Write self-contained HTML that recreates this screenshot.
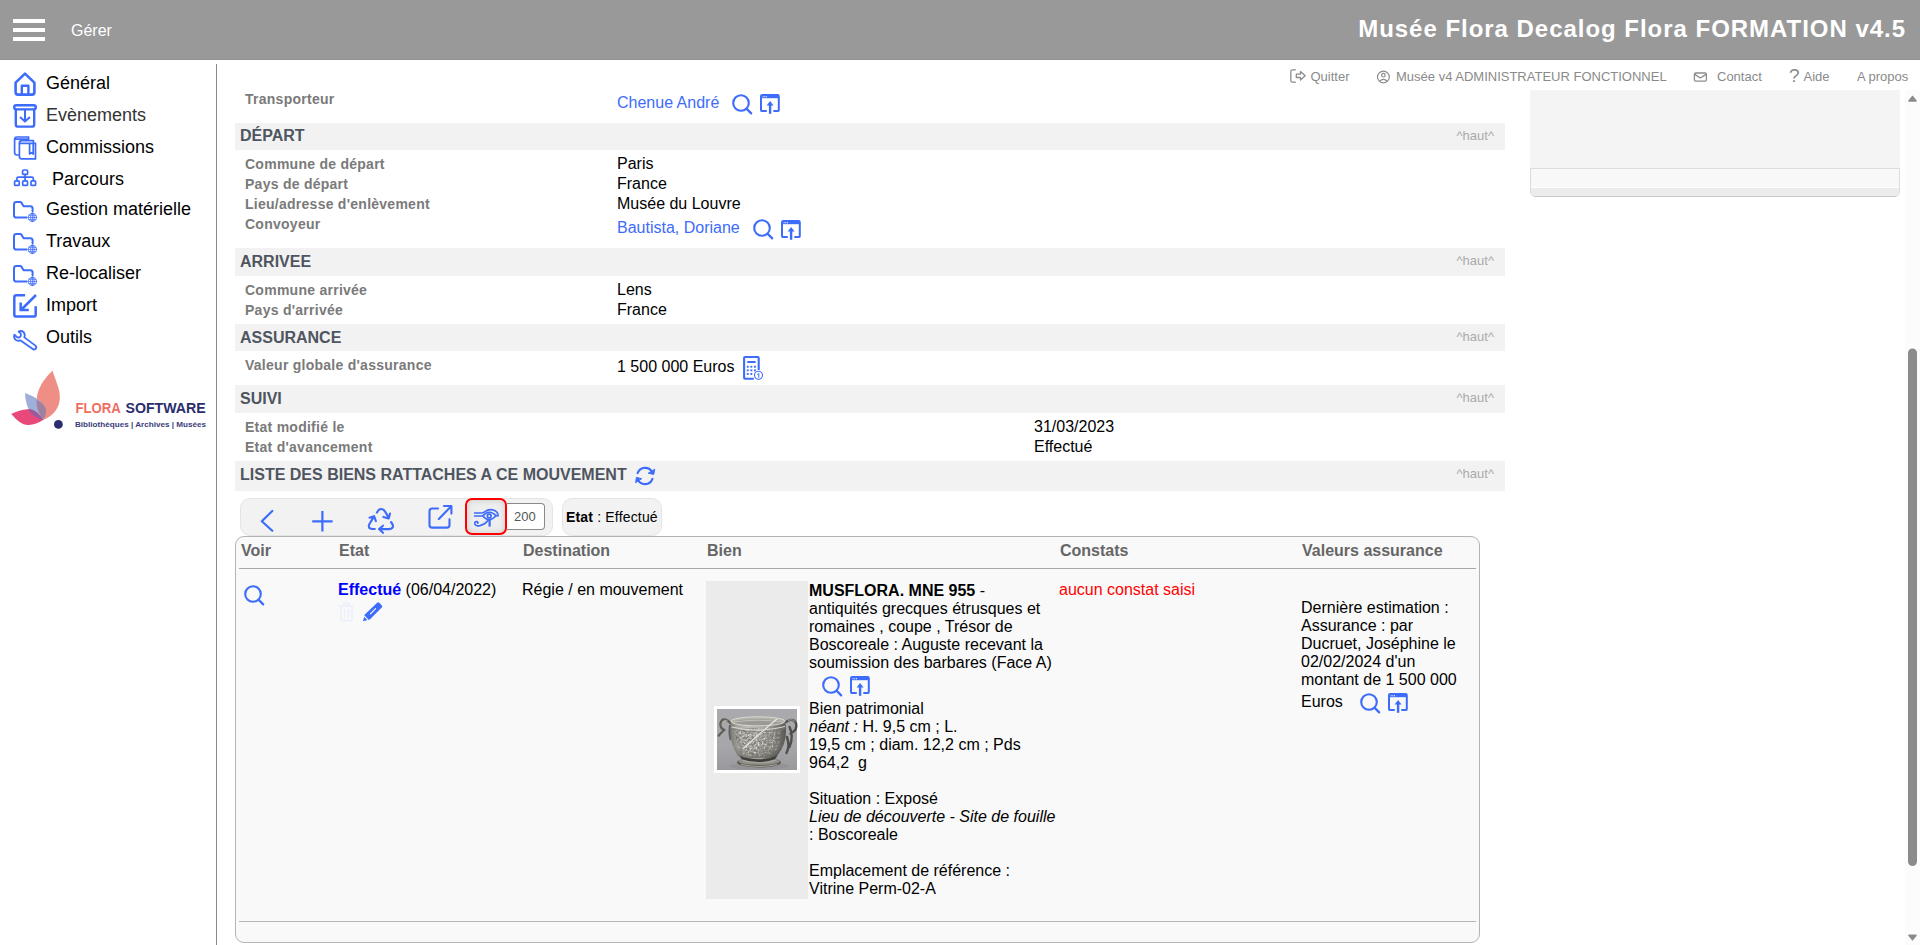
<!DOCTYPE html>
<html lang="fr">
<head>
<meta charset="utf-8">
<title>Musée Flora Decalog Flora FORMATION v4.5</title>
<style>
*{box-sizing:border-box;margin:0;padding:0}
html,body{width:1920px;height:945px;overflow:hidden;background:#fff;font-family:"Liberation Sans",Arial,sans-serif;color:#000}
body{position:relative}
.abs{position:absolute}
svg{display:block;overflow:visible}
.ic{position:absolute;fill:none;stroke:#3d6cfa;stroke-width:2;stroke-linecap:round;stroke-linejoin:round}
#hdr{position:absolute;left:0;top:0;width:1920px;height:60px;background:#999;border-bottom:1px solid #949494}
#hdr .bar{position:absolute;left:13px;width:32px;height:4px;background:#fff}
#hdr .gerer{position:absolute;left:71px;top:22px;font-size:16px;line-height:18px;color:#fff}
#hdr .title{position:absolute;right:14px;top:14px;font-size:24px;line-height:30px;font-weight:bold;color:#fff;letter-spacing:.97px;white-space:nowrap}
#side{position:absolute;left:0;top:60px;width:216px;height:885px}
#vline{position:absolute;left:216px;top:64px;width:1px;height:881px;background:#8a8a8a}
.mi{position:absolute;margin-top:1px;left:46px;font-size:18px;line-height:22px;white-space:nowrap;color:#000}
#top{position:absolute;top:69px;left:0;width:1920px;height:18px;font-size:13px;line-height:16px;color:#8a8a8a}
#top span{position:absolute;top:0;white-space:nowrap}
.sec{position:absolute;left:235px;width:1270px;height:27px;background:#f2f2f2}
.sec b{position:absolute;left:5px;top:4px;font-size:16px;line-height:19px;color:#4f5560;white-space:nowrap}
.sec i{position:absolute;right:11px;top:6px;font-style:normal;font-size:13px;line-height:14px;color:#aaa}
.lb{position:absolute;left:245px;font-size:14px;line-height:16px;font-weight:bold;color:#7a7a7a;letter-spacing:.26px;white-space:nowrap}
.vl{position:absolute;left:617px;font-size:16px;line-height:18px;white-space:nowrap}
.lk{color:#3d6cfa}

.pill{position:absolute;top:498px;height:38px;background:#f2f2f2;border:1px solid #e4e4e4;border-radius:10px}
#eye{position:absolute;left:465px;top:498px;width:42px;height:37px;border:2px solid #f00;border-radius:7px;background:#eee;box-shadow:inset 0 0 6px rgba(0,0,0,.16)}
#nb{position:absolute;left:507px;top:503px;width:38px;height:27px;border:1px solid #8a8a8a;border-left:none;border-radius:0 4px 4px 0;background:#fff;font-size:13px;line-height:25px;color:#555;padding-left:7px}
#tbl{position:absolute;left:235px;top:536px;width:1245px;height:407px;border:1px solid #b4b4b4;border-radius:9px;background:#f9f9f9}
.th{position:absolute;top:542px;font-size:16px;line-height:18px;font-weight:bold;color:#666;white-space:nowrap}
.hl{position:absolute;left:239px;width:1237px;height:1px;background:#a8a8a8}
.td{position:absolute;font-size:16px;line-height:18px;white-space:nowrap}
</style>
</head>
<body>
<div id="hdr">
  <div class="bar" style="top:19px"></div><div class="bar" style="top:28px"></div><div class="bar" style="top:37px"></div>
  <div class="gerer">Gérer</div>
  <div class="title">Musée Flora Decalog Flora FORMATION v4.5</div>
</div>
<div id="side">
  <div class="mi" style="top:11px">Général</div>
  <div class="mi" style="top:43px;color:#333">Evènements</div>
  <div class="mi" style="top:75px">Commissions</div>
  <div class="mi" style="top:107px;left:52px">Parcours</div>
  <div class="mi" style="top:137px">Gestion matérielle</div>
  <div class="mi" style="top:169px">Travaux</div>
  <div class="mi" style="top:201px">Re-localiser</div>
  <div class="mi" style="top:233px">Import</div>
  <div class="mi" style="top:265px">Outils</div>
  <svg class="ic" style="left:0;top:0" width="216" height="400" viewBox="0 60 216 400">
    <!-- home -->
    <path stroke-width="2.6" d="M25 73.6 L15.6 82.6 V92.2 Q15.6 94.6 18 94.6 H32 Q34.4 94.6 34.4 92.2 V82.6 Z"/>
    <path stroke-width="2.4" stroke-linecap="butt" d="M21.8 94.6 V85.7 H28.4 V94.6"/>
    <!-- archive -->
    <rect stroke-width="2.4" x="14.2" y="105.2" width="21.6" height="4.2" rx="2.1"/>
    <path stroke-width="2.4" d="M15.8 109.4 V124.4 Q15.8 126.6 18 126.6 H32 Q34.2 126.6 34.2 124.4 V109.4"/>
    <path stroke-width="2" d="M25 110.5 V121.2 M20.6 117.6 L25 121.6 L29.4 117.6"/>
    <!-- books -->
    <path stroke-width="1.7" d="M28.6 138.8 V137 H17 Q14.6 137 14.6 139.4 V152.6 Q14.6 155 17 155 H18.6 M15 139.2 H28.6"/>
    <path stroke-width="1.7" d="M33.4 143.4 V140.7 H21.8 Q19.4 140.7 19.4 143.1 V156.5 Q19.4 158.9 21.8 158.9 H35.5 V143.4 H19.8 M29.6 143.6 V154 L31.4 152.6 L33.2 154 V143.6"/>
    <!-- orgchart -->
    <g stroke-width="1.7"><rect x="22.6" y="170" width="5" height="4.4" rx="1"/><rect x="14.6" y="180.8" width="4.6" height="4.6" rx="1"/><rect x="22.7" y="180.8" width="4.8" height="4.6" rx="1"/><rect x="31" y="180.8" width="4.6" height="4.6" rx="1"/>
    <path d="M25.1 174.6 V180.6 M16.9 180.6 V178.6 Q16.9 177.2 18.3 177.2 H31.9 Q33.3 177.2 33.3 178.6 V180.6"/></g>
    <!-- folders with globe -->
    <g id="fold" stroke-width="2"><path d="M26.6 217.6 H16.4 Q14 217.6 14 215.2 V204.4 Q14 202 16.4 202 H20 Q21 202 21.6 202.9 L23.6 206.2 H30.2 Q32.6 206.2 32.6 208.6 V211.4"/>
    <g stroke-width=".8"><circle cx="32.4" cy="217.4" r="4.2"/><ellipse cx="32.4" cy="217.4" rx="1.9" ry="4.2"/><path d="M28.2 217.4 H36.6 M32.4 213.2 V221.6 M29 215.2 H35.8 M29 219.6 H35.8"/></g></g>
    <use href="#fold" y="32"/><use href="#fold" y="64"/>
    <!-- import -->
    <path stroke-width="2.5" stroke-linecap="butt" d="M25.1 295.3 H16.4 Q14.3 295.3 14.3 297.4 V314.4 Q14.3 316.5 16.4 316.5 H33.6 Q35.7 316.5 35.7 314.4 V306.2"/>
    <path stroke-width="2.5" stroke-linecap="butt" stroke-linejoin="miter" d="M36 295 L21 310 M20.7 302.4 V310.1 H28.8"/>
    <!-- wrench -->
    <path stroke-width="1.8" d="M18.6 331.6 Q21.4 330.2 23.6 332.2 Q25.4 334.2 24.4 337.4 L35.4 345.6 Q37 347.2 35.6 348.8 Q34.2 350.2 32.4 348.8 L20.6 340.4 Q17.4 341.4 15.4 339.6 Q13.4 337.6 14.4 334.8 L17.4 337.4 Q19.2 337.8 20.4 336.6 Q21.2 335.2 20.8 333.6 Z"/>
  </svg>
  <svg style="position:absolute;left:0;top:300px" width="216" height="80" viewBox="0 360 216 80">
    <path fill="#ef8e84" d="M52.5 370.5 C56 382 60.5 390 59.8 399 C59 410 51 417 43 420 C38 412 35 404 37.5 394 C40 384 47 376 52.5 370.5 Z"/>
    <path fill="#9fb0d8" d="M25 393 C33 396 42 400 45.5 408 C47 413 45 417 43 420 C36 418 29 413 27 405 C25.5 400 25 396 25 393 Z"/>
    <path fill="#e8487a" d="M11.2 413.9 C17 411 24 408.5 30 409.3 C36 410.5 40 415 43 420 C38 423.500 32 425.500 26 424.700 C20 423.500 15 418 11.2 413.9 Z"/>
    <path fill="#9a5b9a" d="M30 409.3 C36 410.5 40 415 43 420 C36 418 30.500 414 28.3 409.200 Z"/>
    <path fill="#a0809e" d="M36.6 399.5 C41 402 44.5 405 45.5 408 C47 413 45 417 43 420 C39 413.500 36 407 36.6 399.5 Z"/>
    <circle cx="58.4" cy="424.4" r="4.4" fill="#2b2d6e"/>
    <text x="75.4" y="413.3" font-family="'Liberation Sans',sans-serif" font-weight="bold" font-size="14.3" fill="#ee6f62" textLength="45.5" lengthAdjust="spacingAndGlyphs">FLORA</text>
    <text x="125.5" y="413.3" font-family="'Liberation Sans',sans-serif" font-weight="bold" font-size="14.3" fill="#2b2d6e" textLength="80.2" lengthAdjust="spacingAndGlyphs">SOFTWARE</text>
    <text x="75" y="427.2" font-family="'Liberation Sans',sans-serif" font-weight="bold" font-size="7.6" fill="#3a3c78" textLength="131" lengthAdjust="spacingAndGlyphs">Bibliothèques | Archives | Musées</text>
  </svg>
</div>
<div id="vline"></div>
<div id="top">
  <svg class="abs" style="left:1288px;top:-2px;fill:none;stroke:#8c8c8c;stroke-width:1.3;stroke-linejoin:round;stroke-linecap:round" width="20" height="18" viewBox="1288 66 20 18">
    <path d="M1295.400 68.800 H1292.600 Q1290.800 68.800 1290.800 70.600 V79.400 Q1290.800 81.200 1292.600 81.200 H1295.400"/>
    <path d="M1296.300 73.100 H1300.500 V70.600 L1305.200 74.800 L1300.500 79 V76.500 H1296.300 Z"/>
  </svg>
  <span style="left:1310.500px">Quitter</span>
  <svg class="abs" style="left:1375px;top:0;fill:none;stroke:#8c8c8c;stroke-width:1.2" width="16" height="16" viewBox="1375 68 16 16">
    <circle cx="1383.400" cy="76" r="5.900"/><circle cx="1383.400" cy="74.200" r="1.800"/><path d="M1379.500 80.400 Q1383.400 76.300 1387.300 80.400"/>
  </svg>
  <span style="left:1396px">Musée v4 ADMINISTRATEUR FONCTIONNEL</span>
  <svg class="abs" style="left:1692px;top:2px;fill:none;stroke:#8c8c8c;stroke-width:1.300;stroke-linejoin:round" width="17" height="12" viewBox="1692 70 17 12">
    <rect x="1694.400" y="72" width="12" height="8.200" rx="1.400"/><path d="M1694.800 73.400 L1700.400 77 L1706 73.400"/>
  </svg>
  <span style="left:1717px">Contact</span>
  <span style="left:1789px;top:-3px;font-size:19px;line-height:20px">?</span>
  <span style="left:1803.500px">Aide</span>
  <span style="left:1857px">A propos</span>
</div>
<div id="main">
<svg width="0" height="0" style="position:absolute"><defs>
<g id="winup"><path stroke-width="2" stroke-linejoin="round" stroke-linecap="butt" d="M6.8 17.100 H2.200 Q1 17.100 1 15.900 V2.200 Q1 1 2.200 1 H17.600 Q18.800 1 18.800 2.200 V15.900 Q18.800 17.100 17.600 17.100 H13.300"/><path stroke="none" fill="#3d6cfa" d="M1 1 H18.800 V4.200 H1 Z"/><path stroke="none" fill="#fff" d="M2.600 2.200 h1 v1 h-1 z M4.300 2.200 h1 v1 h-1 z M6 2.200 h1 v1 h-1 z"/><path stroke-width="2.400" stroke-linecap="butt" d="M10.100 19.800 V9"/><path stroke="none" fill="#3d6cfa" d="M10.100 6.900 L13.600 11.400 H6.600 Z"/></g>
</defs></svg>
<div class="lb" style="top:90.6px">Transporteur</div>
<div class="vl lk" style="top:93.8px;left:617px">Chenue André</div>
<svg class="ic" style="left:730px;top:92px" width="24" height="24" viewBox="-11 -11 24 24"><circle cx="0" cy="0" r="7.8" stroke-width="2.1"/><path stroke-width="2.2" d="M5.7 5.900 L10.200 10.400"/></svg>
<svg class="ic" style="left:760px;top:94px" width="20" height="20" viewBox="0 0 20 20"><use href="#winup"/></svg>
<div class="sec" style="top:123px;height:27px"><b style="top:3px">DÉPART</b><i>^haut^</i></div>
<div class="lb" style="top:156.2px">Commune de départ</div>
<div class="vl" style="top:155.0px;left:617px">Paris</div>
<div class="lb" style="top:176.2px">Pays de départ</div>
<div class="vl" style="top:175.0px;left:617px">France</div>
<div class="lb" style="top:196.2px">Lieu/adresse d'enlèvement</div>
<div class="vl" style="top:195.0px;left:617px">Musée du Louvre</div>
<div class="lb" style="top:216.2px">Convoyeur</div>
<div class="vl lk" style="top:219.4px;left:617px">Bautista, Doriane</div>
<svg class="ic" style="left:751px;top:217px" width="24" height="24" viewBox="-11 -11 24 24"><circle cx="0" cy="0" r="7.8" stroke-width="2.1"/><path stroke-width="2.2" d="M5.7 5.900 L10.200 10.400"/></svg>
<svg class="ic" style="left:781px;top:219.5px" width="20" height="20" viewBox="0 0 20 20"><use href="#winup"/></svg>
<div class="sec" style="top:248px;height:28px"><b>ARRIVEE</b><i>^haut^</i></div>
<div class="lb" style="top:282.1px">Commune arrivée</div>
<div class="vl" style="top:280.8px;left:617px">Lens</div>
<div class="lb" style="top:302.1px">Pays d'arrivée</div>
<div class="vl" style="top:300.9px;left:617px">France</div>
<div class="sec" style="top:324px;height:27px"><b>ASSURANCE</b><i>^haut^</i></div>
<div class="lb" style="top:357.1px">Valeur globale d'assurance</div>
<div class="vl" style="top:358.4px;left:617px">1 500 000 Euros</div>
<div class="sec" style="top:385px;height:28px"><b>SUIVI</b><i>^haut^</i></div>
<div class="lb" style="top:419.1px">Etat modifié le</div>
<div class="vl" style="top:418.4px;left:1034px">31/03/2023</div>
<div class="lb" style="top:439.1px">Etat d'avancement</div>
<div class="vl" style="top:438.4px;left:1034px">Effectué</div>
<div class="sec" style="top:461px;height:30px"><b>LISTE DES BIENS RATTACHES A CE MOUVEMENT</b><i>^haut^</i></div>
<svg class="ic" style="left:742px;top:355px" width="24" height="26" viewBox="742 355 24 26">
<path stroke-width="2.100" stroke-linejoin="round" stroke-linecap="butt" d="M753.800 378.700 H745 Q744.100 378.700 744.100 377.800 V357.900 Q744.100 357 745 357 H757.800 Q758.700 357 758.700 357.900 V370"/>
<path stroke-width="2" d="M748 361.900 H754.900"/>
<g fill="#3d6cfa" stroke="none"><rect x="746.800" y="365.800" width="1.900" height="1.900"/><rect x="750.400" y="365.800" width="1.900" height="1.900"/><rect x="754" y="365.800" width="1.900" height="1.900"/><rect x="746.800" y="369.400" width="1.900" height="1.900"/><rect x="750.400" y="369.400" width="1.900" height="1.900"/><rect x="754" y="369.400" width="1.900" height="1.900"/><rect x="746.800" y="373" width="1.900" height="1.900"/><rect x="750.400" y="373" width="1.900" height="1.900"/></g>
<circle cx="758.500" cy="375.300" r="4" fill="#fff" stroke-width="1.100"/><path stroke-width="1" d="M757.700 374.200 L758.800 373.400 V377.300"/>
</svg>
<svg class="ic" style="left:633px;top:465px" width="24" height="22" viewBox="633 465 24 22">
<path stroke-width="2.100" d="M637.600 473.200 A7.900 7.900 0 0 1 652.300 472.600"/>
<path fill="#3d6cfa" stroke-width="1" d="M654.700 469.600 L653.700 474.400 L648.600 473.300 Z"/>
<path stroke-width="2.100" d="M652.400 478.800 A7.900 7.900 0 0 1 637.700 479.400"/>
<path fill="#3d6cfa" stroke-width="1" d="M635.700 482.300 L636.400 477.400 L641.300 478.600 Z"/>
</svg>
<div class="pill" style="left:240px;width:313px"></div>
<div class="pill" style="left:562px;width:100px"></div>
<svg class="ic" style="left:240px;top:498px" width="313" height="38" viewBox="240 498 313 38">
<path stroke-width="2.200" d="M272.300 511 L261.800 521.200 L272.300 530.800"/>
<path stroke-width="2.200" stroke-linecap="butt" d="M312.200 521.300 H332.600 M322.400 511 V531.600"/>
<g stroke-width="2.100">
<path d="M376.900 512.600 Q379.400 507.300 383.600 509.900 Q385.600 511.600 388.500 517.800 M390 513.500 L388.700 518.600 L383.400 516.900"/>
<path d="M374.800 529 H372.300 Q367.300 528.600 369.300 524.300 L374 516.400 M369.500 517.700 L374.100 516.200 L375.900 521.200"/>
<path d="M391 522 Q393.600 525.300 392.900 527 Q391.800 529.200 388.300 529.100 H379.200 M383 525.700 L379 529.100 L383 532.800"/>
</g>
<path stroke-width="2.100" stroke-linecap="round" d="M438 508.500 H432.200 Q429.500 508.500 429.500 511.200 V524.900 Q429.500 527.600 432.200 527.600 H446.800 Q449.500 527.600 449.500 524.900 V519.400"/>
<path stroke-width="2.100" d="M438.800 519 L451.200 506.200 M444 506 H451.400 V513.600"/>
</svg>
<div id="eye"></div>
<svg class="ic" style="left:472px;top:506px" width="28" height="23" viewBox="472 506 28 23">
<path stroke-width="1.700" d="M474.600 513 H481.600 Q483.200 513 484.600 511.900 Q489.600 508.200 494.600 510.600 Q497.200 512 498 514"/>
<path stroke-width="1.700" d="M474.600 516 H482.600 M495.800 515.700 H498.200"/>
<path stroke-width="1.600" d="M482.800 515.900 Q489.300 508.600 496 515.700 Q489.300 523.400 482.800 515.900 Z"/>
<circle cx="489.200" cy="516" r="2.700" fill="#3d6cfa" stroke="none"/><circle cx="489.200" cy="516" r=".9" fill="#fff" stroke="none"/>
<path stroke-width="2.200" stroke-linecap="butt" d="M489.600 519.600 V526.600"/>
<path stroke-width="1.700" d="M488 520.400 Q485.200 524.200 480 525.600 Q475.600 526.600 474.800 524 Q474.400 521.800 476.600 521.600 Q478.200 521.800 477.800 523.200"/>
</svg>
<div id="nb">200</div>
<div class="abs" style="left:566px;top:509px;font-size:14px;line-height:16px;letter-spacing:.17px;white-space:nowrap"><b>Etat</b> : Effectué</div>
<div id="tbl"></div>
<div class="th" style="left:241px">Voir</div>
<div class="th" style="left:339px">Etat</div>
<div class="th" style="left:523px">Destination</div>
<div class="th" style="left:707px">Bien</div>
<div class="th" style="left:1060px">Constats</div>
<div class="th" style="left:1302px">Valeurs assurance</div>
<div class="hl" style="top:568px"></div>
<div class="hl" style="top:921px;background:#b6b6b6"></div>
<svg class="ic" style="left:242px;top:583px" width="24" height="24" viewBox="-11 -11 24 24"><circle cx="0" cy="0" r="7.8" stroke-width="2.1"/><path stroke-width="2.2" d="M5.7 5.900 L10.200 10.400"/></svg>
<div class="td" style="left:338px;top:580.8px;"><b style="color:#00f">Effectué</b> (06/04/2022)</div>
<div class="td" style="left:522px;top:580.8px;">Régie / en mouvement</div>
<div class="td" style="left:809px;top:581.8px;"><b>MUSFLORA. MNE 955</b> -</div>
<div class="td" style="left:809px;top:599.8px;">antiquités grecques étrusques et</div>
<div class="td" style="left:809px;top:617.8px;">romaines , coupe , Trésor de</div>
<div class="td" style="left:809px;top:635.8px;">Boscoreale : Auguste recevant la</div>
<div class="td" style="left:809px;top:653.8px;">soumission des barbares (Face A)</div>
<div class="td" style="left:809px;top:699.8px;">Bien patrimonial</div>
<div class="td" style="left:809px;top:717.8px;"><i>néant :</i> H. 9,5 cm ; L.</div>
<div class="td" style="left:809px;top:735.8px;">19,5 cm ; diam. 12,2 cm ; Pds</div>
<div class="td" style="left:809px;top:753.8px;">964,2&nbsp; g</div>
<div class="td" style="left:809px;top:789.8px;">Situation : Exposé</div>
<div class="td" style="left:809px;top:807.8px;"><i>Lieu de découverte - Site de fouille</i></div>
<div class="td" style="left:809px;top:825.8px;">: Boscoreale</div>
<div class="td" style="left:809px;top:861.8px;">Emplacement de référence :</div>
<div class="td" style="left:809px;top:879.8px;">Vitrine Perm-02-A</div>
<div class="td" style="left:1059px;top:580.8px;color:#f00">aucun constat saisi</div>
<div class="td" style="left:1301px;top:598.8px;">Dernière estimation :</div>
<div class="td" style="left:1301px;top:616.8px;">Assurance : par</div>
<div class="td" style="left:1301px;top:634.8px;">Ducruet, Joséphine le</div>
<div class="td" style="left:1301px;top:652.8px;">02/02/2024 d'un</div>
<div class="td" style="left:1301px;top:670.8px;">montant de 1 500 000</div>
<div class="td" style="left:1301px;top:692.8px;">Euros</div>
<svg class="abs" style="left:338px;top:601px" width="18" height="21" viewBox="338 601 18 21" fill="none" stroke="#eceffc" stroke-width="1.500"><path d="M339.400 606 H353.600 M343.800 605.600 V603.600 H349.200 V605.600 M341 606.400 V619.400 Q341 620.400 342 620.400 H351 Q352 620.400 352 619.400 V606.400 M344.600 609 V617.600 M348.400 609 V617.600"/></svg>
<svg class="abs" style="left:362px;top:601px" width="22" height="22" viewBox="362 601 22 22"><path fill="#3d6cfa" d="M377.200 602.800 Q378.200 601.800 379.200 602.800 L381.800 605.400 Q382.800 606.400 381.800 607.400 L369.800 619.400 L363 621.200 L364.800 614.400 Z"/><path fill="none" stroke="#fff" stroke-width="1.100" stroke-linecap="round" d="M370.400 613.800 L375.600 608.600 M364.600 616.400 L367.800 619.600"/></svg>
<div class="abs" style="left:706px;top:581px;width:102px;height:318px;background:#ebebeb"></div>
<svg class="abs" style="left:714px;top:706px" width="86" height="67" viewBox="0 0 86 67">
<defs><linearGradient id="bgG" x1="0" y1="0" x2="0" y2="1"><stop offset="0" stop-color="#a9a9ae"/><stop offset=".6" stop-color="#a6a6ab"/><stop offset="1" stop-color="#99999d"/></linearGradient>
<linearGradient id="cupG" x1="0" y1="0" x2="1" y2="0"><stop offset="0" stop-color="#7d7c75"/><stop offset=".12" stop-color="#a9a8a0"/><stop offset=".3" stop-color="#c2c1b9"/><stop offset=".6" stop-color="#aeada5"/><stop offset=".82" stop-color="#85847c"/><stop offset="1" stop-color="#5c5b55"/></linearGradient>
<linearGradient id="cupS" x1="0" y1="0" x2="0" y2="1"><stop offset="0" stop-color="#000" stop-opacity="0"/><stop offset=".7" stop-color="#000" stop-opacity=".08"/><stop offset="1" stop-color="#000" stop-opacity=".38"/></linearGradient>
<filter id="rough" x="0" y="0" width="100%" height="100%"><feTurbulence type="fractalNoise" baseFrequency=".42" numOctaves="2" seed="7" result="n"/><feColorMatrix in="n" type="matrix" values="0 0 0 0 .5  0 0 0 0 .5  0 0 0 0 .47  2.6 0 0 0 -1.15" result="m"/><feComposite in="m" in2="SourceGraphic" operator="in"/></filter>
<filter id="roughD" x="0" y="0" width="100%" height="100%"><feTurbulence type="fractalNoise" baseFrequency=".45" numOctaves="2" seed="23" result="n"/><feColorMatrix in="n" type="matrix" values="0 0 0 0 .18  0 0 0 0 .18  0 0 0 0 .16  0 3 0 0 -1.2" result="m"/><feComposite in="m" in2="SourceGraphic" operator="in"/></filter>
<filter id="roughL" x="0" y="0" width="100%" height="100%"><feTurbulence type="fractalNoise" baseFrequency=".5" numOctaves="2" seed="3" result="n"/><feColorMatrix in="n" type="matrix" values="0 0 0 0 .9  0 0 0 0 .9  0 0 0 0 .87  0 0 3.2 0 -1.75" result="m"/><feComposite in="m" in2="SourceGraphic" operator="in"/></filter>
</defs>
<rect width="86" height="67" fill="#fff"/><rect x="3" y="3" width="80" height="61" fill="url(#bgG)"/>
<ellipse cx="45" cy="60" rx="30" ry="3.500" fill="#8c8c90" opacity=".55"/>
<path d="M17.500 18 Q9 9.500 6.500 17 Q5.500 22 10.500 24 M9 25 Q6 28 4.800 29.500 M16 20 Q15 27 16.500 33" fill="none" stroke="#605f58" stroke-width="2.300" stroke-linecap="round"/>
<path d="M8 16.500 Q10 13.500 13.500 15" fill="none" stroke="#b5b4ac" stroke-width="1"/>
<path d="M71 16.500 Q79 11 82 17 Q84 24 76.500 27.500 M75.500 21 Q80 30 75.500 41 M73 31 Q76 40 72.500 47" fill="none" stroke="#4f4e48" stroke-width="2.400" stroke-linecap="round"/>
<path d="M74 14.500 Q79 12.500 81.500 16" fill="none" stroke="#a5a49c" stroke-width="1"/>
<path d="M17 15.500 Q43 8 71 15.500 Q75 36 63 50 Q43 56 24 50 Q13.500 34 17 15.500 Z" fill="url(#cupG)"/>
<path d="M17 15.500 Q43 8 71 15.500 Q75 36 63 50 Q43 56 24 50 Q13.500 34 17 15.500 Z" fill="url(#cupS)"/>
<path d="M22 24 Q43 20 66 24 Q68 37 60 48 Q43 53 27 48 Q19 36 22 24 Z" fill="#000" filter="url(#rough)"/>
<path d="M22 24 Q43 20 66 24 Q68 37 60 48 Q43 53 27 48 Q19 36 22 24 Z" fill="#000" filter="url(#roughD)"/>
<path d="M26 25 Q43 22 62 25 Q63 36 56 46 Q43 50 31 46 Q24 36 26 25 Z" fill="#000" filter="url(#roughL)"/>
<ellipse cx="44" cy="15.300" rx="27" ry="4.500" fill="#b3b2ab" stroke="#dad9d3" stroke-width="1"/>
<ellipse cx="44" cy="16.200" rx="24" ry="3" fill="#9b9a93"/><path d="M20 16 Q44 12.500 68 16" fill="none" stroke="#c9c8c1" stroke-width=".8"/>
<path d="M17.500 21 Q44 27.500 71 20.500" fill="none" stroke="#d6d5ce" stroke-width="1.100"/><path d="M18 23 Q44 29.500 70.500 22.500" fill="none" stroke="#7d7c75" stroke-width=".8"/>
<ellipse cx="45" cy="56.500" rx="22" ry="5" fill="#5d5c56"/><ellipse cx="45" cy="55.200" rx="20.500" ry="3.800" fill="#8d8c85"/><ellipse cx="45" cy="54.600" rx="17" ry="2.600" fill="#a3a29a"/>
<path d="M25 49.500 Q44 57 63.500 49.500 L61 53.200 Q44 59 28 53.200 Z" fill="#3f3e3a"/>
<path d="M27 58.500 Q45 62.500 63 58.500" fill="none" stroke="#b9b8b1" stroke-width=".8"/>
<path d="M63 13 Q46 27 29 43" stroke="#e9e9e4" stroke-width="1.100" fill="none"/>
</svg>
<svg class="ic" style="left:820px;top:674px" width="24" height="24" viewBox="-11 -11 24 24"><circle cx="0" cy="0" r="7.8" stroke-width="2.1"/><path stroke-width="2.2" d="M5.7 5.900 L10.200 10.400"/></svg>
<svg class="ic" style="left:850px;top:676px" width="20" height="20" viewBox="0 0 20 20"><use href="#winup"/></svg>
<svg class="ic" style="left:1358px;top:691px" width="24" height="24" viewBox="-11 -11 24 24"><circle cx="0" cy="0" r="7.8" stroke-width="2.1"/><path stroke-width="2.2" d="M5.7 5.900 L10.200 10.400"/></svg>
<svg class="ic" style="left:1388px;top:693px" width="20" height="20" viewBox="0 0 20 20"><use href="#winup"/></svg>
<div class="abs" style="left:1530px;top:90px;width:370px;height:107px;background:#f4f4f4;border-radius:0 0 5px 5px;overflow:hidden">
<div class="abs" style="left:0;top:78px;width:370px;height:29px;border:1px solid #dcdcdc;border-bottom-color:#c8c8c8;border-radius:0 0 5px 5px;background:#f8f8f8"></div>
<div class="abs" style="left:1px;top:97px;width:368px;height:1px;background:#fff"></div>
<div class="abs" style="left:1px;top:98px;width:368px;height:8px;background:#ececec;border-radius:0 0 4px 4px"></div>
</div>
<div class="abs" style="left:1905px;top:90px;width:15px;height:855px;background:#fcfcfc"></div>
<svg class="abs" style="left:1905px;top:90px" width="15" height="855" viewBox="1905 90 15 855"><path fill="#8b8b8b" stroke="#8b8b8b" stroke-width="1.400" stroke-linejoin="round" d="M1908.900 101 L1912.500 96.400 L1916.100 101 Z M1908.900 935.200 L1916.100 935.200 L1912.500 939.800 Z"/><rect x="1908" y="348.500" width="9" height="517.500" rx="4.500" fill="#8b8b8b"/></svg>
</div>
</body>
</html>
